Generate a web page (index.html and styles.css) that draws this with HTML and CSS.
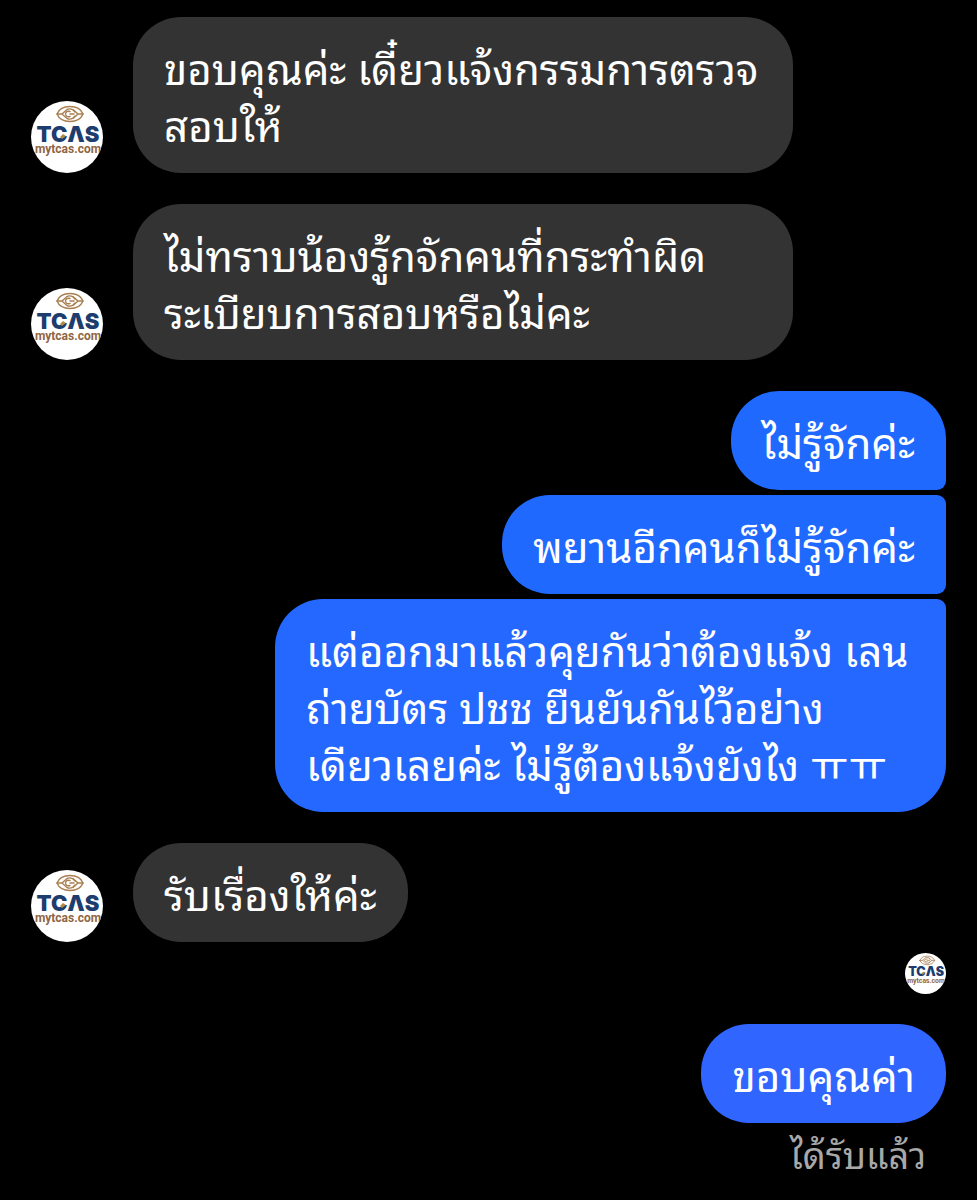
FILE: index.html
```html
<!DOCTYPE html>
<html lang="th">
<head>
    <meta charset="UTF-8">
    <meta name="viewport" content="width=device-width, initial-scale=1.0">
    <title>TCAS Chat</title>
    <link rel="stylesheet" href="styles.css">
</head>
<body>
    <!-- Logo, used for every avatar -->
    <svg class="defs" aria-hidden="true">
        <symbol id="tcas-logo" viewBox="0 0 72 72">
            <rect width="72" height="72" fill="#ffffff"/>
            <g fill="none" stroke="#a97f50" stroke-width="1.4" stroke-linecap="round">
                <path d="M26 13C28 8 33 5.500 39 5.500S50 8 52 13C50 18 45 20.500 39 20.500S28 18 26 13Z"/>
                <path d="M26 13H31L36 8.500Q39 7 42 9L44 11M31 13L36 17.500Q39 19 42 17L44 15M52 13H47L42 8.500M47 13L42 17.500"/>
                <path d="M39 10.500Q35 9.500 34.500 13Q35 16.500 39 15.500M39 13H43"/>
            </g>
            <text class="logo-name" x="37" y="41" text-anchor="middle">TCΛS</text>
            <path d="M29 36L32 33L35 35L31 38Z" fill="#b58a45"/>
            <text class="logo-site" x="37" y="52" text-anchor="middle">mytcas.com</text>
        </symbol>
    </svg>

    <main class="chat">
        <div class="message received">
            <svg class="avatar" role="img" aria-label="TCAS"><use href="#tcas-logo"/></svg>
            <p class="bubble">ขอบคุณค่ะ เดี๋ยวแจ้งกรรมการตรวจสอบให้</p>
        </div>

        <div class="message received">
            <svg class="avatar" role="img" aria-label="TCAS"><use href="#tcas-logo"/></svg>
            <p class="bubble">ไม่ทราบน้องรู้กจักคนที่กระทำผิดระเบียบการสอบหรือไม่คะ</p>
        </div>

        <div class="group">
            <div class="message sent">
                <p class="bubble first">ไม่รู้จักค่ะ</p>
            </div>
            <div class="message sent">
                <p class="bubble middle">พยานอีกคนก็ไม่รู้จักค่ะ</p>
            </div>
            <div class="message sent">
                <p class="bubble last">แต่ออกมาแล้วคุยกันว่าต้องแจ้ง เลนถ่ายบัตร ปชช ยืนยันกันไว้อย่าง<br>เดียวเลยค่ะ ไม่รู้ต้องแจ้งยังไง ㅠㅠ</p>
            </div>
        </div>

        <div class="message received">
            <svg class="avatar" role="img" aria-label="TCAS"><use href="#tcas-logo"/></svg>
            <p class="bubble">รับเรื่องให้ค่ะ</p>
        </div>

        <div class="seen">
            <svg class="avatar small" role="img" aria-label="TCAS"><use href="#tcas-logo"/></svg>
        </div>

        <div class="message sent">
            <p class="bubble newest">ขอบคุณค่า</p>
        </div>
        <p class="status">ได้รับแล้ว</p>
    </main>
</body>
</html>
```
FILE: styles.css
```css
* {
    box-sizing: border-box;
}

body {
    margin: 0;
    background-color: #000;
    color: #fff;
    font-family: "Noto Sans Thai Looped", "Noto Looped Thai", Loma, Garuda, Waree, Roboto, "Noto Sans CJK KR", sans-serif;
    font-size: 42px;
    line-height: 57px;
}

p {
    margin: 0;
}

.defs {
    position: absolute;
    width: 0;
    height: 0;
}

.chat {
    display: flex;
    flex-direction: column;
    padding: 17px 31px;
}

.message {
    display: flex;
    margin-bottom: 31px;
}

.received {
    align-items: flex-end;
    gap: 30px;
}

.sent {
    justify-content: flex-end;
}

.bubble {
    max-width: 660px;
    padding: 21px 31px;
    border-radius: 48px;
    background-color: #333;
}

.sent .bubble {
    max-width: 671px;
    background-color: #2069ff;
}

.sent .first {
    border-bottom-right-radius: 9px;
}

.sent .middle {
    border-top-right-radius: 9px;
    border-bottom-right-radius: 9px;
}

.sent .last {
    border-top-right-radius: 9px;
    background-color: #2568ff;
}

.sent .newest {
    background-color: #3065ff;
}

.group {
    display: flex;
    flex-direction: column;
    gap: 5px;
    margin-bottom: 31px;
}

.group .message {
    margin-bottom: 0;
}

.avatar {
    flex: none;
    width: 72px;
    height: 72px;
    border-radius: 50%;
}

.avatar.small {
    width: 41px;
    height: 41px;
}

.logo-name {
    fill: #1c3d6e;
    font: 900 22px Inter, sans-serif;
}

.logo-site {
    fill: #8f6542;
    font: 700 12px Roboto, sans-serif;
}

.seen {
    display: flex;
    justify-content: flex-end;
    margin: -20px 0 30px;
}

.status {
    margin-top: -29px;
    padding-right: 20px;
    color: #a8a8a8;
    font-size: 36px;
    text-align: right;
}
```
